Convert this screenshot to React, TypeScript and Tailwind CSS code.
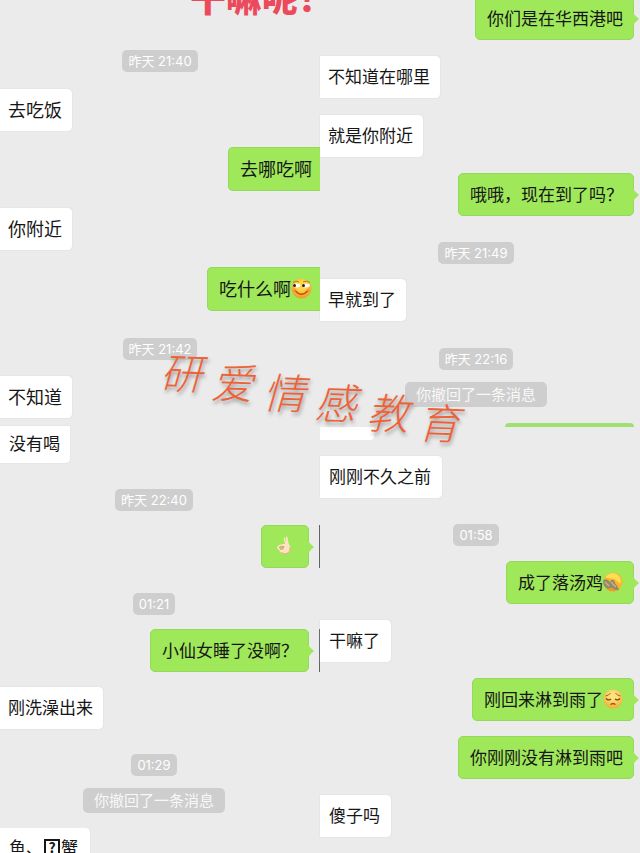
import type { ReactNode } from "react";

function Received({ children, className = "" }: { children: ReactNode; className?: string }) {
  return (
    <div className={`flex justify-start ${className}`}>
      <p className="flex h-[42px] items-center rounded-r-[4px] bg-white pr-2.5 pb-0.5 pl-2 whitespace-nowrap shadow-[0_0_1px_#bbbbbb]">
        {children}
      </p>
    </div>
  );
}

function Sent({
  children,
  className = "",
  kind = "edge",
}: {
  children: ReactNode;
  className?: string;
  kind?: "edge" | "cut" | "avatar";
}) {
  const cut = kind === "cut";
  return (
    <div className={`flex justify-end ${className}`}>
      <p
        className={`flex items-center border border-[#92d95c] bg-[#9fe85a] pb-0.5 pl-[11px] whitespace-nowrap ${
          cut ? "h-[44px] rounded-l-[5px] border-r-0 pr-2" : "h-[43px] rounded-[5px] pr-2.5"
        }`}
      >
        {children}
      </p>
      {!cut && (
        <svg className="-ml-px w-[6px] self-center" height="14" viewBox="0 0 6 14" aria-hidden="true">
          <path d="M0 0 Q1 3 6 7 Q1 11 0 14Z" fill="#9fe85a" />
        </svg>
      )}
      {kind === "edge" && <span className="w-px" />}
      {kind === "avatar" && <span className="ml-[5px] w-px bg-[#60646a]" />}
    </div>
  );
}

function Time({ children, className = "" }: { children: ReactNode; className?: string }) {
  return (
    <div className={`flex justify-center ${className}`}>
      <time className="flex h-[22px] items-center rounded-[5px] bg-[#cecece] px-[6px] font-[Inter,'Noto_Sans_CJK_SC',sans-serif] text-[13px] whitespace-nowrap text-white">
        {children}
      </time>
    </div>
  );
}

function Recalled({ className = "" }: { className?: string }) {
  return (
    <div className={`flex justify-center ${className}`}>
      <p className="flex h-[25px] items-center rounded-[5px] bg-[#cecece] px-[11px] pb-0.5 text-[15px] whitespace-nowrap text-[#f8f8f8]">
        你撤回了一条消息
      </p>
    </div>
  );
}

function SmirkFace() {
  return (
    <svg width="21" height="21" viewBox="0 0 21 21" aria-hidden="true">
      <defs>
        <radialGradient id="smirk" cx="50%" cy="35%" r="65%">
          <stop offset="0.3" stopColor="#ffd84a" />
          <stop offset="1" stopColor="#f09a20" />
        </radialGradient>
      </defs>
      <circle cx="10.500" cy="10.500" r="10" fill="url(#smirk)" />
      <path d="M2 4.500Q5 2 8 4M12 4Q16 2 19 4.500" stroke="#c07a20" fill="none" />
      <ellipse cx="5.500" cy="7.500" rx="3.800" ry="1.900" fill="#fff" />
      <ellipse cx="15" cy="7.500" rx="3.800" ry="1.900" fill="#fff" />
      <circle cx="3.500" cy="7.500" r="1.500" fill="#302018" />
      <circle cx="12.500" cy="7.500" r="1.500" fill="#302018" />
      <path d="M4 12.500Q10.500 20 17 12.500" stroke="#b9541a" strokeWidth="1.300" fill="none" />
      <circle cx="3.500" cy="12" r="1.600" fill="#f4874b" opacity=".7" />
      <circle cx="17.500" cy="12" r="1.600" fill="#f4874b" opacity=".7" />
    </svg>
  );
}

function FacepalmFace() {
  return (
    <svg width="20" height="20" viewBox="0 0 20 20" aria-hidden="true">
      <circle cx="10" cy="10" r="9.500" fill="#fbb62b" />
      <path d="M3 4Q10 -2 16 4Q19 8 17 12Q12 5 3 6Z" fill="#ffdc55" />
      <path d="M0 9Q1 6 5 8L7 10Q8 7 11 8L12 11Q15 14 16 18Q12 19 9 16L5 17Q0 15 0 9Z" fill="#94896a" />
      <path d="M2 10L6 14M8 10L13 15" stroke="#c9b48b" strokeWidth="1.400" />
      <path d="M3 17Q7 20 13 19L9 16Z" fill="#ed9925" />
    </svg>
  );
}

function PensiveFace() {
  return (
    <svg width="20" height="20" viewBox="0 0 20 20" aria-hidden="true">
      <defs>
        <radialGradient id="pensive" cx="50%" cy="35%" r="65%">
          <stop offset="0.3" stopColor="#ffe07a" />
          <stop offset="1" stopColor="#f2ac34" />
        </radialGradient>
      </defs>
      <circle cx="10" cy="10" r="9.500" fill="url(#pensive)" />
      <path d="M2.500 7Q6 6.500 7.500 4M12.500 4Q14 6.500 17.500 7" stroke="#a5631c" fill="none" />
      <path d="M3 9.500Q5.500 12 8 10M12 10Q14.500 12 17 9.500" stroke="#754515" strokeWidth="1.300" fill="none" />
      <path d="M7.500 15.500Q10 13.800 12.500 15.500" stroke="#8a4a18" strokeWidth="1.300" fill="none" />
    </svg>
  );
}

function OkHand() {
  return (
    <svg width="14" height="19" viewBox="0 0 14 19" aria-hidden="true">
      <path
        d="M6.500 2Q7.500 1 8.200 2.500L9 6L8.800 1Q9.800 0 10.600 1.500L11.500 7L13.200 11Q13.800 16 10.500 17.500Q6 19 3.500 16.500L2 14Q0 13 0 11Q1.500 8.500 6 8L8 8Z"
        fill="#fde3bf"
      />
      <path d="M2 11.500Q4.500 9.500 7 10.800Q6.500 13.500 3.500 13.500" stroke="#d29f72" fill="#b5d469" />
      <path d="M4 16.500Q8 19 11 17Q13.500 15 13 11.500" stroke="#e3a981" fill="none" />
    </svg>
  );
}

const watermark = ["研", "爱", "情", "感", "教", "育"];

export default function App() {
  return (
    <main className="relative overflow-hidden bg-[#ebebeb] font-['Noto_Sans_CJK_SC',sans-serif] text-[17px] leading-[24px] text-[#161616]">
      <div className="grid grid-cols-2">
        <div>
          <section className="text-[18px]">
            <header className="flex h-[20px] items-end justify-end overflow-hidden">
              <h1 className="-mr-[14px] pb-1 text-[36px] leading-[40px] font-black whitespace-nowrap text-[#ec4a5c]">
                干嘛呢！
              </h1>
            </header>
            <Time className="mt-[30px]">昨天 21:40</Time>
            <Received className="mt-[17px]">去吃饭</Received>
            <Sent className="mt-4" kind="cut">去哪吃啊</Sent>
            <Received className="mt-[17px]">你附近</Received>
            <Sent className="mt-[17px]" kind="cut">
              吃什么啊
              <SmirkFace />
            </Sent>
            <Time className="mt-[27px]">昨天 21:42</Time>
            <Received className="mt-4">不知道</Received>
          </section>

          <section className="mt-2">
            <div className="flex">
              <p className="flex h-[37px] items-center rounded-br-[4px] bg-white pr-2.5 pb-1 pl-[9px] shadow-[0_0_1px_#bbbbbb]">
                没有喝
              </p>
            </div>
            <Time className="mt-[26px] pr-3">昨天 22:40</Time>
            <Sent className="mt-[14px]" kind="avatar">
              <span className="flex w-[25px] pl-1">
                <OkHand />
              </span>
            </Sent>
            <Time className="mt-[25px] pr-3">01:21</Time>
            <Sent className="mt-[14px]" kind="avatar">
              小仙女睡了没啊？
            </Sent>
            <Received className="mt-[15px]">刚洗澡出来</Received>
            <Time className="mt-[25px] pr-3">01:29</Time>
            <Recalled className="mt-3 pr-3" />
            <div className="mt-[15px] flex h-[27px] overflow-hidden">
              <p className="flex h-[42px] items-center rounded-tr-[4px] bg-white pr-3 pb-1 pl-[9px] shadow-[0_0_1px_#bbbbbb]">
                鱼、
                <span className="mx-px flex h-[17px] w-[16px] items-center justify-center border-2 border-[#161616] text-[14px] font-bold">
                  ?
                </span>
                蟹
              </p>
            </div>
          </section>
        </div>

        <div>
          <section>
            <Sent className="-mt-[3px]">你们是在华西港吧</Sent>
            <Received className="mt-4">不知道在哪里</Received>
            <Received className="mt-[17px]">就是你附近</Received>
            <Sent className="mt-4">哦哦，现在到了吗？</Sent>
            <Time className="mt-[26px] pr-2">昨天 21:49</Time>
            <Received className="mt-[15px]">早就到了</Received>
            <Time className="mt-[27px] pr-2">昨天 22:16</Time>
            <Recalled className="mt-3 pr-2" />
            <div className="mt-4 flex h-1 justify-end pr-[6px]">
              <span className="w-[129px] rounded-t-[4px] bg-[#9fe072]" />
            </div>
          </section>

          <section>
            <div className="h-[13px] w-[54px] rounded-br-[4px] bg-white" />
            <Received className="mt-4">
              <span className="px-px">刚刚不久之前</span>
            </Received>
            <Time className="mt-[26px] pr-2">01:58</Time>
            <Sent className="mt-[15px]">
              成了落汤鸡
              <FacepalmFace />
            </Sent>
            <Received className="mt-4">
              <span className="px-px">干嘛了</span>
            </Received>
            <Sent className="mt-4">
              刚回来淋到雨了
              <PensiveFace />
            </Sent>
            <Sent className="mt-[15px]">你刚刚没有淋到雨吧</Sent>
            <Received className="mt-4">
              <span className="px-px">傻子吗</span>
            </Received>
          </section>
        </div>
      </div>

      <div className="pointer-events-none absolute top-[371px] left-[158px] flex w-[304px] rotate-[11deg] justify-between text-[42px] leading-[50px] text-[#ee6238] italic [text-shadow:1px_3px_4px_#999999]">
        {watermark.map((character) => (
          <span key={character} className="-rotate-[9deg] font-light">
            {character}
          </span>
        ))}
      </div>
    </main>
  );
}
